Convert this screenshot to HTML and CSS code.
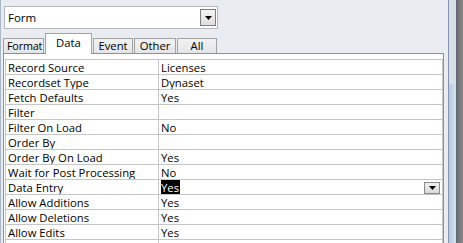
FILE: index.html
```html
<!DOCTYPE html>
<html lang="en">
<head>
    <meta charset="UTF-8">
    <title>Property Sheet - Form</title>
    <link rel="stylesheet" href="styles.css">
</head>
<body>

    <div class="sheet">
        <div class="pane">
            <!-- Selection type -->
            <div class="selector">
                <span class="selector-text">Form</span>
                <span class="drop-btn">
                    <svg width="7" height="4" viewBox="0 0 7 4"><path d="M0 0H7L3.5 4Z" fill="#000"/></svg>
                </span>
            </div>

            <!-- Tabs -->
            <div class="tabs">
                <div class="tab tab-format">Format</div>
                <div class="tab tab-data active">Data</div>
                <div class="tab tab-event">Event</div>
                <div class="tab tab-other">Other</div>
                <div class="tab tab-all">All</div>
            </div>

            <!-- Property grid -->
            <div class="grid">
                <table class="props">
                    <tr><td class="name">Record Source</td><td class="value">Licenses</td></tr>
                    <tr><td class="name">Recordset Type</td><td class="value">Dynaset</td></tr>
                    <tr><td class="name">Fetch Defaults</td><td class="value">Yes</td></tr>
                    <tr><td class="name">Filter</td><td class="value"></td></tr>
                    <tr><td class="name">Filter On Load</td><td class="value">No</td></tr>
                    <tr><td class="name">Order By</td><td class="value"></td></tr>
                    <tr><td class="name">Order By On Load</td><td class="value">Yes</td></tr>
                    <tr><td class="name">Wait for Post Processing</td><td class="value">No</td></tr>
                    <tr class="editing">
                        <td class="name">Data Entry</td>
                        <td class="value">
                            <span class="selected">Yes</span>
                            <span class="cell-btn">
                                <svg width="7" height="4" viewBox="0 0 7 4"><path d="M0 0H7L3.5 4Z" fill="#000"/></svg>
                            </span>
                        </td>
                    </tr>
                    <tr><td class="name">Allow Additions</td><td class="value">Yes</td></tr>
                    <tr><td class="name">Allow Deletions</td><td class="value">Yes</td></tr>
                    <tr><td class="name">Allow Edits</td><td class="value">Yes</td></tr>
                    <!-- next row only peeks in at the bottom -->
                    <tr><td class="name"></td><td class="value"></td></tr>
                </table>
            </div>
        </div>

        <!-- Scroll / splitter edge -->
        <div class="edge">
            <div class="edge-strip">
                <div class="strip-top"></div>
                <div class="strip-thumb"></div>
            </div>
            <div class="edge-dark"></div>
        </div>
    </div>

</body>
</html>
```

FILE: styles.css
```css
body {
    margin: 0;
    padding: 0;
    background-color: #e9ecf0;
    font-family: "Open Sans", "Noto Sans", sans-serif;
    font-size: 11.3px;
    color: #000;
    overflow: hidden;
}

.sheet {
    display: flex;
    width: 463px;
    height: 243px;
    overflow: hidden;
}

.pane {
    width: 444px;
    border-left: 1px solid #a9b6c6;
    box-sizing: border-box;
}

/* Selection type combo */
.selector {
    display: flex;
    align-items: center;
    justify-content: space-between;
    width: 214px;
    height: 23px;
    margin: 6px 0 0 3px;
    box-sizing: border-box;
    background-color: #fff;
    border: 1px solid #b5b8bd;
    padding: 0 1px 0 3px;
}

.selector-text {
    font-size: 11.5px;
}

.drop-btn {
    display: flex;
    align-items: center;
    justify-content: center;
    width: 16px;
    height: 17px;
    box-sizing: border-box;
    border: 1px solid #7d7d7d;
    background: linear-gradient(#f4f4f4, #dedede);
}

/* Tabs */
.tabs {
    display: flex;
    align-items: flex-end;
    gap: 1px;
    height: 20px;
    margin: 4px 0 0 2px;
    position: relative;
    z-index: 1;
}

.tab {
    height: 15px;
    box-sizing: border-box;
    border: 1px solid #a3a3a3;
    border-bottom: none;
    background: linear-gradient(#f2f2f2, #e3e5e8);
    display: flex;
    justify-content: center;
    line-height: 14px;
    white-space: nowrap;
}

.tab-format {
    width: 41px;
    justify-content: flex-start;
    padding-left: 3px;
    font-size: 10.8px;
    letter-spacing: -0.2px;
}
.tab-data { width: 47px; }
.tab-event { width: 40px; }
.tab-other { width: 42px; }
.tab-all { width: 40px; }

.tab.active {
    height: 21px;
    margin-bottom: -1px;
    background: #fff;
    line-height: 17px;
}

/* Property grid */
.grid {
    width: 441px;
    height: 200px;
    margin-left: 2px;
    box-sizing: border-box;
    border: 1px solid #8f9092;
    border-bottom: none;
    background-color: #fff;
    padding: 5px 1px 0 1px;
}

.props {
    width: 438px;
    border-collapse: collapse;
    table-layout: fixed;
}

.props td {
    height: 13px;
    padding: 1px 0 0 2px;
    border: 1px solid #c6c6c6;
    white-space: nowrap;
    line-height: 13px;
    overflow: hidden;
}

.props .name {
    width: 150px;
}

.props .value {
    position: relative;
}

.selected {
    background-color: #000;
    color: #fff;
    padding: 0 1px 0 0;
}

.cell-btn {
    position: absolute;
    right: 2px;
    top: 2px;
    display: flex;
    align-items: center;
    justify-content: center;
    width: 16px;
    height: 12px;
    box-sizing: border-box;
    border: 1px solid #8a8a8a;
    background: linear-gradient(#f2f2f2, #d9d9d9);
}

/* Right edge */
.edge {
    display: flex;
    width: 19px;
    padding-left: 4px;
    box-sizing: border-box;
}

.edge-strip {
    width: 9px;
    box-sizing: border-box;
    border-left: 1px solid #8495ad;
    border-right: 1px solid #5f6a78;
    display: flex;
    flex-direction: column;
}

.strip-top {
    height: 84px;
    background-color: #d9dfe7;
}

.strip-thumb {
    flex: 1;
    background: linear-gradient(90deg, #b9cbe0, #d6e2ef);
}

.edge-dark {
    flex: 1;
    background: linear-gradient(90deg, #6e6e6e, #8a8a8a);
}
```
